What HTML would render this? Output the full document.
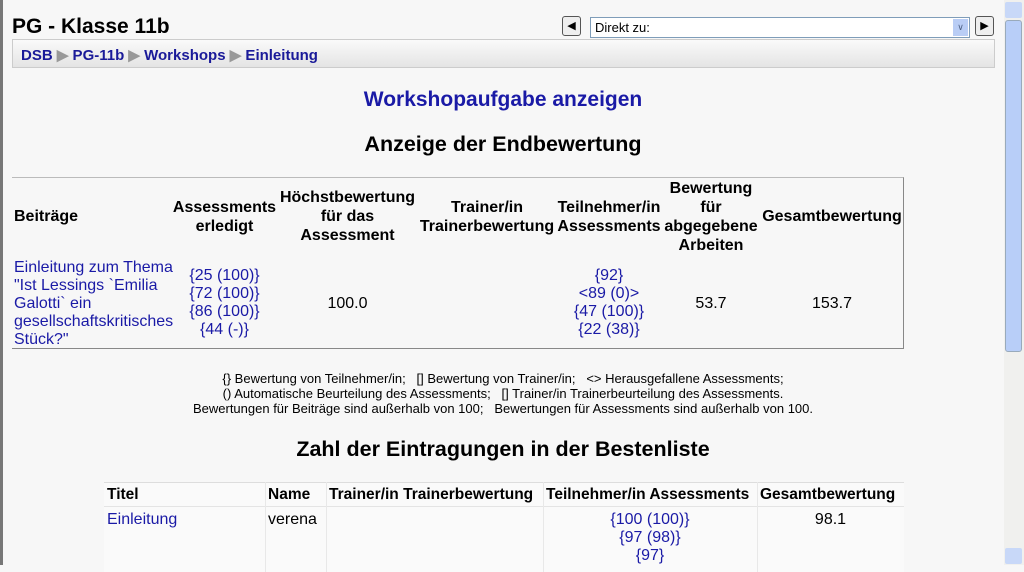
<!DOCTYPE html>
<html><head><meta charset="utf-8"><style>
*{margin:0;padding:0;box-sizing:border-box}
body{width:1024px;height:565px;overflow:hidden;background:#f7f7f7;font-family:"Liberation Sans",Arial,sans-serif;position:relative;color:#000}
.a{position:absolute}
.blue{color:#1a1aa6}
.c{text-align:center}
.h{font-weight:bold;font-size:16px;line-height:19px;white-space:nowrap}
.t{font-size:16px;line-height:18px;white-space:nowrap}
.n{font-size:13px;line-height:15px}
</style></head><body>
<div class="a" style="left:0;top:0;width:3px;height:565px;background:#777"></div>
<div class="a" style="left:12px;top:15px;font-size:21px;font-weight:bold">PG - Klasse 11b</div>
<div class="a" style="left:12px;top:39px;width:983px;height:29px;border:1px solid #ccc;background:linear-gradient(#fafafa,#e4e4e4)"></div>
<div class="a blue" style="left:21px;top:46px;font-size:15px;font-weight:bold;color:#1a1a99">DSB <span style="color:#999">&#9654;</span> PG-11b <span style="color:#999">&#9654;</span> Workshops <span style="color:#999">&#9654;</span> Einleitung</div>
<div class="a" style="left:562px;top:16px;width:19px;height:20px;border:1px solid #555;border-radius:3px;background:#eee;font-size:11px;text-align:center;line-height:18px">&#9664;</div>
<div class="a" style="left:590px;top:17px;width:380px;height:21px;border:1px solid #7f9db9;background:#fff;font-size:13px;line-height:19px;padding-left:4px">Direkt zu:</div>
<div class="a" style="left:953px;top:19px;width:15px;height:17px;background:#b9cdf5;font-size:9px;color:#4d6185;text-align:center;line-height:17px">&#8744;</div>
<div class="a" style="left:975px;top:16px;width:19px;height:20px;border:1px solid #555;border-radius:3px;background:#eee;font-size:11px;text-align:center;line-height:18px">&#9654;</div>
<div class="a" style="left:1004px;top:0;width:20px;height:565px;background:#f0f0ee"></div>
<div class="a" style="left:1005px;top:2px;width:17px;height:16px;background:#c8d8f8;border-radius:2px"></div>
<div class="a" style="left:1005px;top:20px;width:17px;height:332px;background:#b8cef8;border:1px solid #9ab;border-radius:3px"></div>
<div class="a" style="left:1005px;top:548px;width:17px;height:16px;background:#c8d8f8;border-radius:2px"></div>

<div class="a blue c" style="left:0;width:1006px;top:88px;font-size:21px;font-weight:bold;color:#1a1aa6">Workshopaufgabe anzeigen</div>
<div class="a c" style="left:0;width:1006px;top:132px;font-size:21.5px;font-weight:bold">Anzeige der Endbewertung</div>

<div class="a" style="left:12px;top:177px;width:892px;height:172px;border-top:1px solid #bbb;border-right:1px solid #888;border-bottom:1px solid #888"></div>
<div class="a h" style="left:14px;top:207px">Beiträge</div>
<div class="a h c" style="left:172px;width:105px;top:198px">Assessments<br>erledigt</div>
<div class="a h c" style="left:277px;width:141px;top:188px">Höchstbewertung<br>für das<br>Assessment</div>
<div class="a h c" style="left:416px;width:142px;top:198px">Trainer/in<br>Trainerbewertung</div>
<div class="a h c" style="left:556px;width:106px;top:198px">Teilnehmer/in<br>Assessments</div>
<div class="a h c" style="left:662px;width:98px;top:179px">Bewertung<br>für<br>abgegebene<br>Arbeiten</div>
<div class="a h c" style="left:760px;width:144px;top:207px">Gesamtbewertung</div>
<div class="a t blue" style="left:14px;top:259px">Einleitung zum Thema<br>"Ist Lessings `Emilia<br>Galotti` ein<br>gesellschaftskritisches<br>Stück?"</div>
<div class="a t blue c" style="left:172px;width:105px;top:267px">{25 (100)}<br>{72 (100)}<br>{86 (100)}<br>{44 (-)}</div>
<div class="a t c" style="left:277px;width:141px;top:295px">100.0</div>
<div class="a t blue c" style="left:556px;width:106px;top:267px">{92}<br>&lt;89 (0)&gt;<br>{47 (100)}<br>{22 (38)}</div>
<div class="a t c" style="left:662px;width:98px;top:295px">53.7</div>
<div class="a t c" style="left:760px;width:144px;top:295px">153.7</div>

<div class="a n c" style="left:0;width:1006px;top:371px">{} Bewertung von Teilnehmer/in; &nbsp; [] Bewertung von Trainer/in; &nbsp; &lt;&gt; Herausgefallene Assessments;<br>() Automatische Beurteilung des Assessments; &nbsp; [] Trainer/in Trainerbeurteilung des Assessments.<br>Bewertungen für Beiträge sind außerhalb von 100; &nbsp; Bewertungen für Assessments sind außerhalb von 100.</div>

<div class="a c" style="left:0;width:1006px;top:437px;font-size:21.5px;font-weight:bold">Zahl der Eintragungen in der Bestenliste</div>

<div class="a" style="left:104px;top:482px;width:800px;height:90px;border-top:1px solid #ddd;background:#fafafa"></div>
<div class="a" style="left:104px;top:506px;width:800px;height:1px;background:#e4e4e4"></div>
<div class="a" style="left:265px;top:482px;width:1px;height:90px;background:#e8e8e8"></div>
<div class="a" style="left:326px;top:482px;width:1px;height:90px;background:#e8e8e8"></div>
<div class="a" style="left:543px;top:482px;width:1px;height:90px;background:#e8e8e8"></div>
<div class="a" style="left:757px;top:482px;width:1px;height:90px;background:#e8e8e8"></div>
<div class="a h" style="left:107px;top:485px;font-size:15.5px">Titel</div>
<div class="a h" style="left:268px;top:485px;font-size:15.5px">Name</div>
<div class="a h" style="left:329px;top:485px;font-size:15.5px">Trainer/in Trainerbewertung</div>
<div class="a h" style="left:546px;top:485px;font-size:15.5px">Teilnehmer/in Assessments</div>
<div class="a h" style="left:760px;top:485px;font-size:15.5px">Gesamtbewertung</div>
<div class="a t blue" style="left:107px;top:511px">Einleitung</div>
<div class="a t" style="left:268px;top:511px">verena</div>
<div class="a t blue c" style="left:543px;width:214px;top:511px">{100 (100)}<br>{97 (98)}<br>{97}</div>
<div class="a t c" style="left:757px;width:147px;top:511px">98.1</div>
</body></html>
